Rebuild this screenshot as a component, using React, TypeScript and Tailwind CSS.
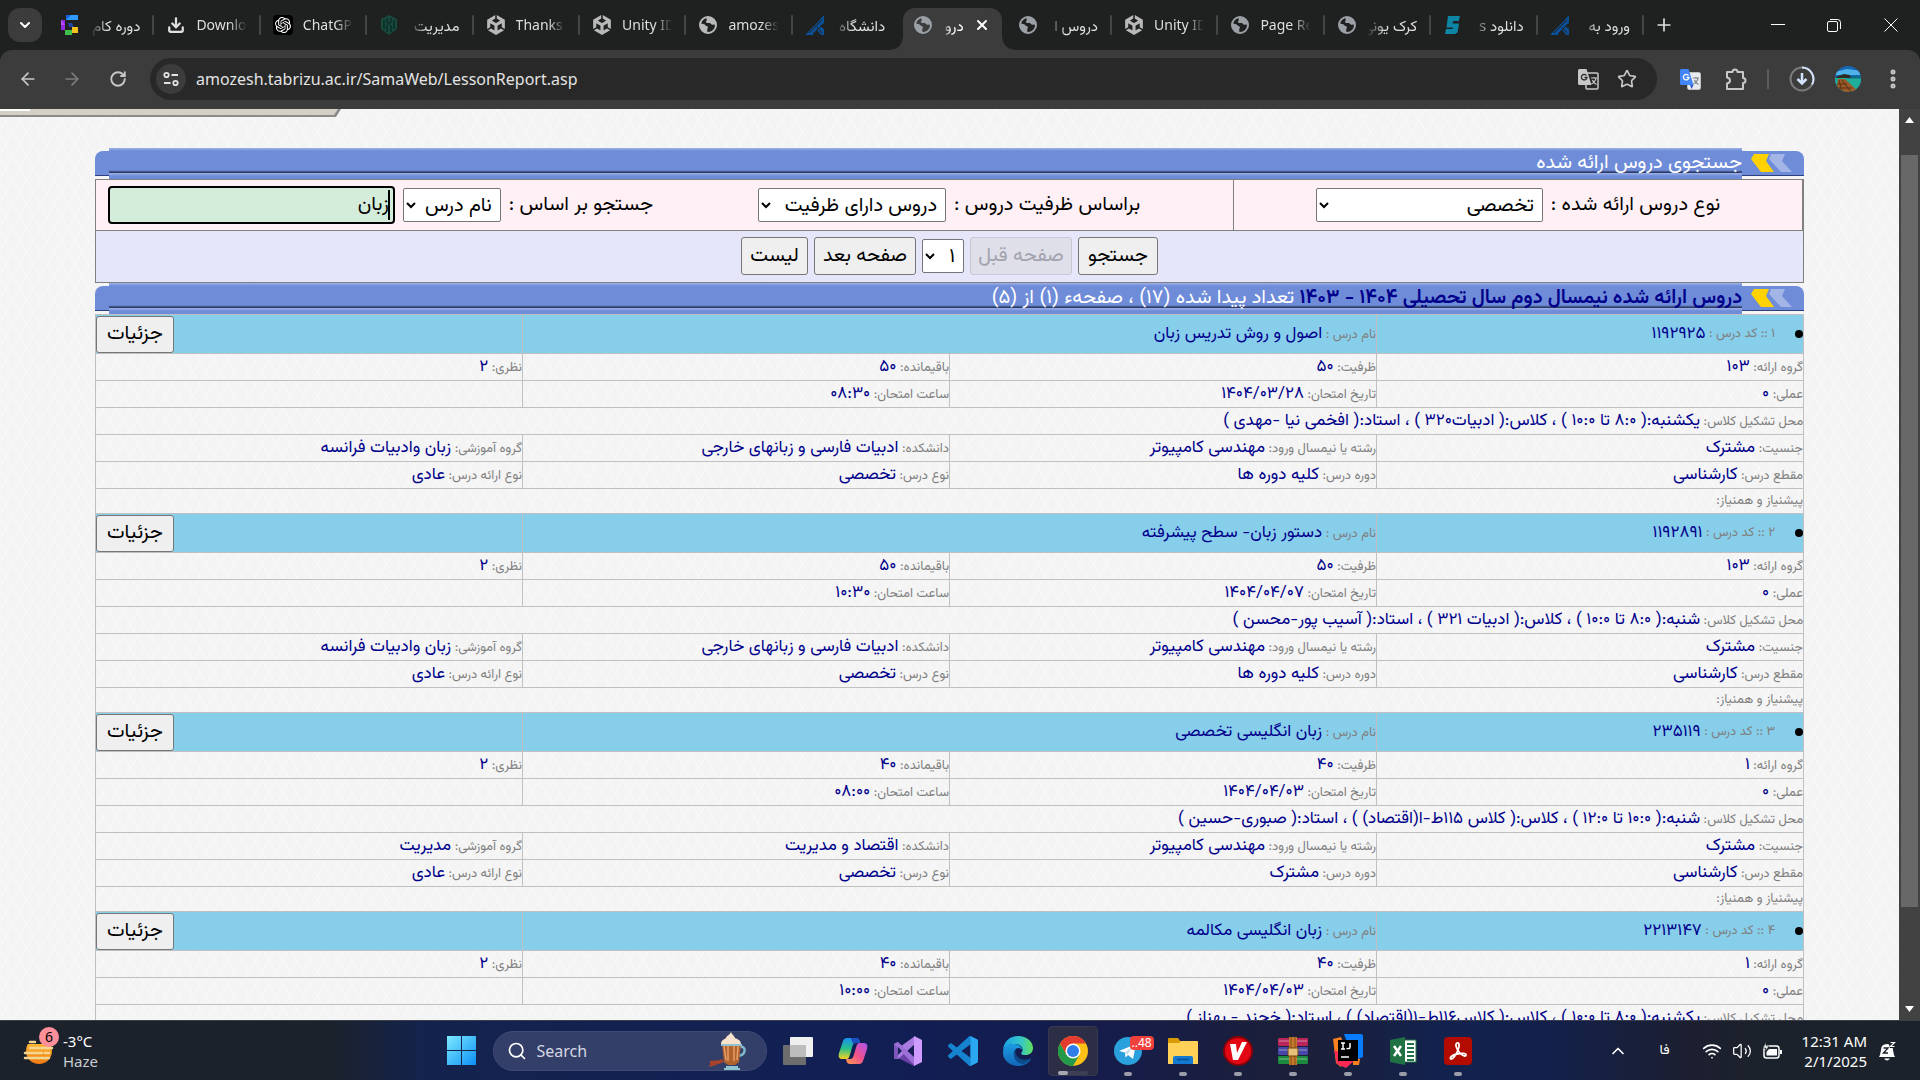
import type { ReactNode } from 'react';
import {
  ArrowLeft,
  ArrowRight,
  ChevronDown,
  ChevronUp,
  Download,
  EllipsisVertical,
  Plus,
  RotateCw,
  Search,
  Star,
  Volume2,
  Wifi,
  X,
} from 'lucide-react';
import { SiOpenai, SiUnity } from 'react-icons/si';

/* ---------- favicons ---------- */

function GlobeIcon({ className }: { className: string }) {
  return (
    <svg viewBox="0 0 20 20" className={className} fill="none">
      <circle cx="10" cy="10" r="8" stroke="currentColor" strokeWidth="2" />
      <path
        d="M2.5 8.5c2 .3 3.6.2 4.6 1.6.9 1.300 2.200 .8 2.700 1.900.5 1.200-.8 1.800-.6 3.200L9.500 18C5.500 18 2 14.500 2 10z"
        fill="currentColor"
      />
      <path
        d="M8.500 2.200C7.800 3.600 9.400 4.300 8.600 5.600c-.6 1-1.300 1.800.2 2.300 1.700.5 2.600-.4 3.700.6.9.9 2 1.700 2.700 1.200.8-.5 1.500.2 2.700.6C18 6 15 2 10 2z"
        fill="currentColor"
      />
    </svg>
  );
}

function UnityIcon() {
  return <SiUnity className="size-5 text-[#b9b9b9]" />;
}

function CourseIcon() {
  return (
    <svg viewBox="0 0 20 20" className="size-5">
      <path d="M6 0h12v5H6z" fill="#2f9bff" />
      <path d="M6 0h5L6 5z" fill="#1a5fe0" />
      <path d="M1 5h4v10H1z" fill="#8f2be0" />
      <path d="M1 5l4 5H1z" fill="#c04cf5" />
      <path d="M5 15h7v5H5z" fill="#3fbf4c" />
      <path d="M12 12h6v6h-6z" fill="#f3c21b" />
      <path d="M8 8h4l2 4H9z" fill="#2441a8" />
    </svg>
  );
}

function ShieldIcon() {
  return (
    <svg viewBox="0 0 20 20" className="size-5">
      <path d="M10 0l8 4v10l-8 6-8-6V4z" fill="#17493d" />
      <path d="M5 5v9M8 3v4l2 2 2-2V3M15 5v9M8 10v7M12 10v7" stroke="#0d2c26" strokeWidth="1.500" fill="none" />
    </svg>
  );
}

function TabrizIcon() {
  return (
    <svg viewBox="0 0 20 20" className="size-5" fill="none">
      <path d="M19 0v8l-4 3 4 3v6h-3l-4-5-4 5H0L12 8z" fill="#0b4f96" />
      <path d="M17 5L4 18M17 10l-9 9M12 12l5 6" stroke="#1f2120" strokeWidth="1" />
    </svg>
  );
}

function SoftIcon() {
  return (
    <svg viewBox="0 0 20 20" className="size-5" fill="#0d86a6">
      <path d="M5 1h12l-1.200 5H10l-.4 2.500H16l-1.500 9L12 19H2l1-5h6.500l.4-1.500H3.500z" />
    </svg>
  );
}

function OpenAiTile() {
  return (
    <span className="flex size-5 items-center justify-center rounded bg-black">
      <SiOpenai className="size-4 text-white" />
    </span>
  );
}

/* ---------- browser tabs ---------- */

type Tab = { title: string; icon: ReactNode; rtl?: boolean };

const greyGlobe = <GlobeIcon className="size-5 text-[#b9b9b9]" />;
const blueGlobe = <GlobeIcon className="size-5 text-[#9aa0a6]" />;

const tabsBefore: Tab[] = [
  { title: 'دوره کام', icon: <CourseIcon />, rtl: true },
  { title: 'Downlo', icon: <Download className="size-[18px] text-[#e0e0e0]" strokeWidth={3} /> },
  { title: 'ChatGP', icon: <OpenAiTile /> },
  { title: 'مدیریت', icon: <ShieldIcon />, rtl: true },
  { title: 'Thanks', icon: <UnityIcon /> },
  { title: 'Unity ID', icon: <UnityIcon /> },
  { title: 'amozes', icon: greyGlobe },
  { title: 'دانشگاه', icon: <TabrizIcon />, rtl: true },
];

const tabsAfter: Tab[] = [
  { title: 'دروس ا', icon: blueGlobe, rtl: true },
  { title: 'Unity ID', icon: <UnityIcon /> },
  { title: 'Page Re', icon: blueGlobe },
  { title: 'کرک یونی', icon: blueGlobe, rtl: true },
  { title: 'دانلود s', icon: <SoftIcon />, rtl: true },
  { title: 'ورود به', icon: <TabrizIcon />, rtl: true },
];

function TabTitle({ title, rtl }: { title: string; rtl?: boolean }) {
  return (
    <span
      dir={rtl ? 'rtl' : 'ltr'}
      className={
        rtl
          ? 'min-w-0 flex-1 overflow-hidden whitespace-nowrap text-right text-[15px] [mask-image:linear-gradient(to_left,black_65%,transparent)]'
          : 'min-w-0 flex-1 overflow-hidden whitespace-nowrap text-left text-sm [mask-image:linear-gradient(to_right,black_65%,transparent)]'
      }
    >
      {title}
    </span>
  );
}

function BrowserTab({ tab, divider = true }: { tab: Tab; divider?: boolean }) {
  return (
    <button
      role="tab"
      aria-selected="false"
      className="flex h-[34px] min-w-0 items-center pl-3 text-[#dedede]"
    >
      <span className="mr-2.5 flex size-5 shrink-0 items-center justify-center">{tab.icon}</span>
      <TabTitle title={tab.title} rtl={tab.rtl} />
      <span className={divider ? 'ml-3 h-5 w-0.5 rounded bg-[#444645]' : 'ml-3 h-5 w-0.5'} />
    </button>
  );
}

function TabStrip() {
  return (
    <div className="flex h-[50px] bg-[#1f2120]">
      <div className="flex h-full items-center pl-2 pr-1.5">
        <button aria-label="Search tabs" className="flex size-[34px] items-center justify-center rounded-xl bg-[#3c3c3c] text-white">
          <ChevronDown className="size-4" strokeWidth={3} />
        </button>
      </div>
      <div role="tablist" className="mt-2 grid h-[42px] max-w-[1596px] min-w-0 flex-1 grid-cols-[repeat(15,minmax(0,1fr))]">
        {tabsBefore.map((tab, i) => (
          <BrowserTab key={i} tab={tab} divider={i < tabsBefore.length - 1} />
        ))}
        <div className="relative flex h-[42px] min-w-0">
          <span className="absolute -left-2 bottom-0 size-3 bg-[radial-gradient(circle_at_0_0,#1f2120_11px,#3c3c3c_12px)]" />
          <span className="absolute -right-2 bottom-0 size-3 bg-[radial-gradient(circle_at_100%_0,#1f2120_11px,#3c3c3c_12px)]" />
          <div className="mx-1 flex h-full min-w-0 flex-1 items-center gap-2.5 rounded-t-xl bg-[#3c3c3c] pb-2 pl-2.5 pr-3 text-white">
            <span className="shrink-0">{blueGlobe}</span>
            <TabTitle title="درو" rtl />
            <button aria-label="Close tab" className="shrink-0">
              <X className="size-4" strokeWidth={3} />
            </button>
          </div>
        </div>
        {tabsAfter.map((tab, i) => (
          <BrowserTab key={i} tab={tab} />
        ))}
      </div>
      <button aria-label="New tab" className="flex h-[50px] w-10 items-center justify-center text-[#dedede]">
        <Plus className="size-5" strokeWidth={2} />
      </button>
      <div className="ml-auto flex h-full text-white">
        <button aria-label="Minimize" className="flex w-14 items-center justify-center">
          <svg viewBox="0 0 14 14" className="size-3.5" stroke="currentColor">
            <path d="M0 6.500h14" />
          </svg>
        </button>
        <button aria-label="Restore" className="flex w-14 items-center justify-center">
          <svg viewBox="0 0 14 14" className="size-3.5" stroke="currentColor" fill="none">
            <rect x=".5" y="3.500" width="10" height="10" rx="1.500" />
            <path d="M3 1.500h7.500a3 3 0 0 1 3 3V11" />
          </svg>
        </button>
        <button aria-label="Close" className="flex w-[58px] items-center justify-center">
          <svg viewBox="0 0 14 14" className="size-3.5" stroke="currentColor">
            <path d="M.5.5l13 13M13.500.5l-13 13" />
          </svg>
        </button>
      </div>
    </div>
  );
}

/* ---------- address bar ---------- */

function TranslateIcon({ coloured }: { coloured?: boolean }) {
  return (
    <svg viewBox="0 0 22 22" className="size-[22px]">
      <rect x="9" y="5" width="12" height="16" rx="1" fill={coloured ? '#e8eaed' : 'none'} stroke={coloured ? '#e8eaed' : '#c7c7c7'} strokeWidth="1.500" />
      <path d="M1 2.500A1.500 1.500 0 0 1 2.500 1h7l5 16h-12A1.500 1.500 0 0 1 1 15.500z" fill={coloured ? '#4285f4' : '#c7c7c7'} />
      {coloured && <path d="M11 17h3.500L12.500 21z" fill="#2a56c6" />}
      <path d="M9.500 7.500A2.800 2.800 0 1 0 10 9.500H7.500" fill="none" stroke={coloured ? '#fff' : '#282828'} strokeWidth="1.300" />
      <path d="M14 10h6M17 9v1M19 10c-.5 3-2.500 5-4.500 6M15.500 12c.5 2 2 3.500 4 4.500" fill="none" stroke={coloured ? '#7a8288' : '#c7c7c7'} strokeWidth="1.200" />
    </svg>
  );
}

function PuzzleIcon() {
  return (
    <svg viewBox="0 0 22 24" className="h-6 w-[22px]" fill="none" stroke="#c7c7c7" strokeWidth="2" strokeLinejoin="round">
      <path d="M2 5h5.500a2.500 2.500 0 0 1 5 0H18v6a2.500 2.500 0 0 1 0 5v6H2v-5.500c2-.3 3-1.500 3-3s-1-2.700-3-3z" />
    </svg>
  );
}

function AddressBar() {
  return (
    <div className="bg-[#1f2120]">
      <div className="flex h-[59px] items-center rounded-t-xl bg-[#3c3c3c] pb-px text-[#c7c7c7]">
        <button aria-label="Back" className="flex w-14 justify-center">
          <ArrowLeft className="size-5" />
        </button>
        <button aria-label="Forward" className="flex w-8 justify-center text-[#7d7d7d]">
          <ArrowRight className="size-5" />
        </button>
        <button aria-label="Reload" className="flex w-[60px] justify-center">
          <RotateCw className="size-[18px]" strokeWidth={2.5} />
        </button>
        <div className="ml-0.5 flex h-[42px] min-w-0 flex-1 items-center rounded-full bg-[#282828] pl-1.5 pr-5">
          <button aria-label="View site information" className="flex size-[30px] shrink-0 items-center justify-center rounded-full bg-[#3c3c3c]">
            <svg viewBox="0 0 16 16" className="size-4" fill="none" stroke="#e3e3e3" strokeWidth="1.800">
              <circle cx="3.500" cy="4" r="2.200" />
              <path d="M8.500 4H15M1 12h6.500" />
              <circle cx="12.500" cy="12" r="2.200" />
            </svg>
          </button>
          <input
            aria-label="Address"
            readOnly
            value="amozesh.tabrizu.ac.ir/SamaWeb/LessonReport.asp"
            className="ml-2.5 min-w-0 flex-1 bg-transparent text-base text-[#e3e3e3] outline-none"
          />
          <button aria-label="Translate this page" className="mr-[18px]">
            <TranslateIcon />
          </button>
          <button aria-label="Bookmark this tab">
            <Star className="size-5" />
          </button>
        </div>
        <div className="flex w-[263px] items-center pl-[22px]">
          <button aria-label="Google Translate" className="mr-6">
            <TranslateIcon coloured />
          </button>
          <button aria-label="Extensions" className="mr-5">
            <PuzzleIcon />
          </button>
          <span className="mr-5 h-5 w-0.5 bg-[#5c5c5c]" />
          <button aria-label="Downloads" className="mr-5">
            <svg viewBox="0 0 26 26" className="size-[26px]" fill="none" strokeWidth="2">
              <circle cx="13" cy="13" r="11.500" stroke="#7b7b7b" />
              <path d="M13 1.500A11.500 11.500 0 0 1 23 18.500" stroke="#d3e3fd" />
              <path d="M13 7v10M8.500 13l4.500 4.500 4.500-4.500" stroke="#d3e3fd" strokeWidth="2.500" />
            </svg>
          </button>
          <button aria-label="Profile" className="mr-5">
            <svg viewBox="0 0 26 26" className="size-[26px]">
              <clipPath id="avatar-clip">
                <circle cx="13" cy="13" r="13" />
              </clipPath>
              <g clipPath="url(#avatar-clip)">
                <path d="M0 0h26v26H0z" fill="#1767b8" />
                <path d="M0 6l12-3 14 2v4H0z" fill="#4fb3ea" />
                <path d="M0 11h26v15H0z" fill="#1fae9a" />
                <path d="M12 10h14v2.500H12z" fill="#0e6d85" />
                <path d="M3 10l6-2 6 1 1 3H0z" fill="#2d2c24" />
                <path d="M3 13h7l14 13H1z" fill="#9a5a2a" />
                <path d="M4 14l3 12M7 14l9 12M2 18h10M2 22h15" stroke="#5c3012" />
              </g>
            </svg>
          </button>
          <button aria-label="Menu">
            <EllipsisVertical className="size-6" strokeWidth={3} />
          </button>
        </div>
      </div>
    </div>
  );
}

/* ---------- page content ---------- */

function SectionTitle({ children }: { children: ReactNode }) {
  return (
    <div className="flex h-[31px] items-center">
      <div className="h-[25px] w-[62px] rounded-tr-lg border-b border-[#2d3f7d] bg-[#6f8cd9]">
        <svg viewBox="0 0 62 24" className="h-6 w-[62px]">
          <path d="M29 3h14l-3 7 10 11H39L27 8z" fill="#a3b5e6" />
          <path d="M12 3h15l-3 7 8 11H19L9 8z" fill="#ffd200" />
        </svg>
      </div>
      <h2 className="h-full min-w-0 flex-1 bg-[repeating-linear-gradient(to_bottom,#9db2e8_0px,#6f8cd9_3px,#6f8cd9_22px,#5c76bd_23px,#2d3a63_24px,#2d3a63_25px)] text-xl leading-[31px] text-white">
        {children}
      </h2>
      <div className="h-[25px] w-3.5 rounded-tl-lg border-b border-[#2d3f7d] bg-[#6f8cd9]" />
    </div>
  );
}

const controlClass = 'h-[34px] rounded-xs border border-[#767676] bg-white px-1 text-xl leading-8 text-black';
const buttonClass =
  'h-[38px] rounded-[3px] border border-[#767676] bg-[#efefef] text-xl text-black disabled:border-[#c8c8d4] disabled:bg-[#dfdfea] disabled:text-[#a3a3ad]';

function SearchForm() {
  return (
    <form className="border border-[#808080] text-xl text-black" onSubmit={(e) => e.preventDefault()}>
      <div className="grid h-[51px] grid-cols-3 divide-x divide-x-reverse divide-[#808080] border-b border-[#808080] bg-[#fff0f5]">
        <div className="flex items-center justify-center gap-2">
          <label htmlFor="lesson-type">نوع دروس ارائه شده :</label>
          <select id="lesson-type" className={`${controlClass} w-[227px]`}>
            <option>تخصصی</option>
          </select>
        </div>
        <div className="flex items-center justify-center gap-2">
          <label htmlFor="capacity">براساس ظرفیت دروس :</label>
          <select id="capacity" className={`${controlClass} w-[188px]`}>
            <option>دروس دارای ظرفیت</option>
          </select>
        </div>
        <div className="flex items-center justify-center gap-2">
          <label htmlFor="search-by">جستجو بر اساس :</label>
          <select id="search-by" className={`${controlClass} w-[98px]`}>
            <option>نام درس</option>
          </select>
          <span className="relative flex">
            <input
              aria-label="عبارت جستجو"
              defaultValue="زبان"
              className="h-[38px] w-[287px] rounded border-2 border-black bg-[#d4edda] px-1 text-xl outline-none"
            />
            <span className="absolute right-[5px] top-1 h-[30px] w-0.5 bg-black" />
          </span>
        </div>
      </div>
      <div className="flex h-[51px] items-center justify-center gap-1.5 bg-[#e6e6fa] pb-px">
        <button className={`${buttonClass} w-20`}>جستجو</button>
        <button disabled className={`${buttonClass} w-[102px]`}>
          صفحه قبل
        </button>
        <select aria-label="صفحه" className={`${controlClass} w-[42px]`}>
          <option>۱</option>
        </select>
        <button className={`${buttonClass} w-[102px]`}>صفحه بعد</button>
        <button className={`${buttonClass} w-[67px]`}>لیست</button>
      </div>
    </form>
  );
}

type Lesson = {
  index: string;
  code: string;
  name: string;
  group: string;
  capacity: string;
  date: string;
  time: string;
  place: string;
  faculty: string;
  department: string;
  period: string;
};

const lessons: Lesson[] = [
  {
    index: '۱',
    code: '۱۱۹۲۹۲۵',
    name: 'اصول و روش تدریس زبان',
    group: '۱۰۳',
    capacity: '۵۰',
    date: '۱۴۰۴/۰۳/۲۸',
    time: '۰۸:۳۰',
    place: 'یکشنبه:( ۸:۰ تا ۱۰:۰ ) ، کلاس:( ادبیات۳۲۰ ) ، استاد:( افخمی نیا -مهدی )',
    faculty: 'ادبیات فارسی و زبانهای خارجی',
    department: 'زبان وادبیات فرانسه',
    period: 'کلیه دوره ها',
  },
  {
    index: '۲',
    code: '۱۱۹۲۸۹۱',
    name: 'دستور زبان- سطح پیشرفته',
    group: '۱۰۳',
    capacity: '۵۰',
    date: '۱۴۰۴/۰۴/۰۷',
    time: '۱۰:۳۰',
    place: 'شنبه:( ۸:۰ تا ۱۰:۰ ) ، کلاس:( ادبیات ۳۲۱ ) ، استاد:( آسیب پور-محسن )',
    faculty: 'ادبیات فارسی و زبانهای خارجی',
    department: 'زبان وادبیات فرانسه',
    period: 'کلیه دوره ها',
  },
  {
    index: '۳',
    code: '۲۳۵۱۱۹',
    name: 'زبان انگلیسی تخصصی',
    group: '۱',
    capacity: '۴۰',
    date: '۱۴۰۴/۰۴/۰۳',
    time: '۰۸:۰۰',
    place: 'شنبه:( ۱۰:۰ تا ۱۲:۰ ) ، کلاس:( کلاس ۱۱۵ط-ا(اقتصاد) ) ، استاد:( صبوری-حسین )',
    faculty: 'اقتصاد و مدیریت',
    department: 'مدیریت',
    period: 'مشترک',
  },
  {
    index: '۴',
    code: '۲۲۱۳۱۴۷',
    name: 'زبان انگلیسی مکالمه',
    group: '۱',
    capacity: '۴۰',
    date: '۱۴۰۴/۰۴/۰۳',
    time: '۱۰:۰۰',
    place: 'یکشنبه:( ۸:۰ تا ۱۰:۰ ) ، کلاس:( کلاس۱۱۶ط-۱(اقتصاد) ) ، استاد:( خجند - بهناز )',
    faculty: 'اقتصاد و مدیریت',
    department: 'مدیریت',
    period: 'مشترک',
  },
];

function Field({ label, value, span = 1 }: { label: string; value?: string; span?: number }) {
  return (
    <td colSpan={span} className="border border-[#c0c0c0]">
      <span className="text-[13px] text-[#808080]">{label} </span>
      {value && <span className="text-[17px] text-[#00008b]">{value}</span>}
    </td>
  );
}

function LessonRows({ lesson }: { lesson: Lesson }) {
  return (
    <tbody className="leading-6">
      <tr className="h-[39px] bg-[#87ceeb]">
        <td className="border border-[#c0c0c0]">
          <span className="flex items-center">
            <span className="size-2 rounded-full bg-black" />
            <span className="mr-5 text-[13px] text-[#808080]">
              {lesson.index} :: کد درس :&nbsp;
            </span>
            <span className="text-[17px] text-[#00008b]">{lesson.code}</span>
          </span>
        </td>
        <Field label="نام درس :" value={lesson.name} span={2} />
        <td className="border border-[#c0c0c0] p-0">
          <button className="mr-auto block h-[37px] w-[78px] rounded-[3px] border border-[#767676] bg-[#efefef] text-xl leading-none text-black">
            جزئیات
          </button>
        </td>
      </tr>
      <tr className="h-[27px]">
        <Field label="گروه ارائه:" value={lesson.group} />
        <Field label="ظرفیت:" value={lesson.capacity} />
        <Field label="باقیمانده:" value={lesson.capacity} />
        <Field label="نظری:" value="۲" />
      </tr>
      <tr className="h-[27px]">
        <Field label="عملی:" value="۰" />
        <Field label="تاریخ امتحان:" value={lesson.date} />
        <Field label="ساعت امتحان:" value={lesson.time} />
        <td className="border border-[#c0c0c0]" />
      </tr>
      <tr className="h-[27px]">
        <Field label="محل تشکیل کلاس:" value={lesson.place} span={4} />
      </tr>
      <tr className="h-[27px]">
        <Field label="جنسیت:" value="مشترک" />
        <Field label="رشته یا نیمسال ورود:" value="مهندسی کامپیوتر" />
        <Field label="دانشکده:" value={lesson.faculty} />
        <Field label="گروه آموزشی:" value={lesson.department} />
      </tr>
      <tr className="h-[27px]">
        <Field label="مقطع درس:" value="کارشناسی" />
        <Field label="دوره درس:" value={lesson.period} />
        <Field label="نوع درس:" value="تخصصی" />
        <Field label="نوع ارائه درس:" value="عادی" />
      </tr>
      <tr className="h-[25px]">
        <Field label="پیشنیاز و همنیاز:" span={4} />
      </tr>
    </tbody>
  );
}

function Page() {
  return (
    <main
      dir="rtl"
      className="relative min-w-0 flex-1 overflow-hidden bg-[#f4f4f4] bg-[image:repeating-linear-gradient(60deg,transparent_0px,transparent_10px,#fafafa_11px,#f0f0f0_12px),repeating-linear-gradient(120deg,transparent_0px,transparent_10px,#fafafa_11px,#f0f0f0_12px)] font-['Vazirmatn','DejaVu_Sans',sans-serif]"
    >
      <svg viewBox="0 0 342 9" className="absolute left-0 top-0 h-[9px] w-[342px]">
        <path d="M0 0h341l-5 8H0z" fill="#8d8b87" />
        <path d="M0 0h338l-4 6H0z" fill="#d4d0c8" />
        <path d="M0 0h30v2H0z" fill="#ffffff" />
      </svg>
      <div className="mx-[5%] pt-[39px]">
        <SectionTitle>جستجوی دروس ارائه شده</SectionTitle>
        <SearchForm />
        <SectionTitle>
          <span className="font-semibold text-[#00008b]">دروس ارائه شده نیمسال دوم سال تحصیلی ۱۴۰۴ - ۱۴۰۳</span> تعداد پیدا شده (۱۷) ، صفحهء (۱) از (۵)
        </SectionTitle>
        <table className="w-full table-fixed border-collapse">
          {lessons.map((lesson) => (
            <LessonRows key={lesson.index} lesson={lesson} />
          ))}
        </table>
      </div>
    </main>
  );
}

function PageScrollbar() {
  return (
    <div className="flex w-[21px] flex-col items-center bg-[#424242] py-2">
      <svg viewBox="0 0 9 6" className="h-1.5 w-[9px]">
        <path d="M4.500 0L9 6H0z" fill="#fff" />
      </svg>
      <div className="mt-8 h-[84%] w-[17px] bg-[#686868]" />
      <svg viewBox="0 0 9 6" className="mt-auto h-1.5 w-[9px]">
        <path d="M4.500 6L9 0H0z" fill="#fff" />
      </svg>
    </div>
  );
}

/* ---------- taskbar ---------- */

function Dot() {
  return <span className="absolute bottom-[5px] h-1 w-2 rounded-full bg-[#9a9ca8]" />;
}

function TaskButton({ label, running, children }: { label: string; running?: boolean; children: ReactNode }) {
  return (
    <button aria-label={label} className="relative flex h-[60px] w-[55px] items-center justify-center">
      {children}
      {running && <Dot />}
    </button>
  );
}

function WeatherIcon() {
  return (
    <svg viewBox="0 0 36 36" className="size-9">
      <defs>
        <linearGradient id="sun" x1="0" y1="0" x2="0" y2="1">
          <stop offset="0" stopColor="#ffc83a" />
          <stop offset="1" stopColor="#f07a12" />
        </linearGradient>
      </defs>
      <circle cx="16" cy="18" r="13" fill="url(#sun)" />
      <path d="M2 2h26v9H2z" fill="#1c222b" />
      <path d="M7 9h5M7 15h22M2 20h17M22 20h4M2 25h24" stroke="#f3d693" strokeWidth="2.500" strokeLinecap="round" />
    </svg>
  );
}

function DrinkIcon() {
  return (
    <svg viewBox="0 0 40 38" className="h-[38px] w-10">
      <path d="M32 15c6-2 7 8-2 9" fill="none" stroke="#7fb9c9" strokeWidth="2.500" />
      <path d="M1 33l13-6 2 3-14 5zM2 29l12-1v3L2 32z" fill="#a8432a" />
      <path d="M14 12h19l-2 18-4 3h-7l-4-3z" fill="#b2622d" />
      <path d="M16 14l2 14M20 14v15M26 14v15M30 14l-1 14" stroke="#e3a06a" strokeWidth="1.500" />
      <path d="M13 13h21M18 35h12M16 37h16" stroke="#8fc3d1" strokeWidth="2" />
      <path d="M13 12c0-4 4-5 5-6 1-3 3-2 5-6 1 3 3 3 4 6 2 1 6 2 6 6z" fill="#f7e3cd" />
    </svg>
  );
}

function CopilotIcon() {
  return (
    <svg viewBox="0 0 30 30" className="size-[30px]">
      <defs>
        <linearGradient id="cp-a" x1="0" y1="0" x2="0" y2="1">
          <stop offset="0" stopColor="#1a8ff0" />
          <stop offset=".5" stopColor="#28c08a" />
          <stop offset="1" stopColor="#f5d21f" />
        </linearGradient>
        <linearGradient id="cp-b" x1="1" y1="0" x2="0" y2="1">
          <stop offset="0" stopColor="#a856f0" />
          <stop offset=".5" stopColor="#f0508f" />
          <stop offset="1" stopColor="#ff9a4a" />
        </linearGradient>
      </defs>
      <path d="M9 2h9c2 0 3 1 3.500 3l.5 2h-4c-2 0-3 1-3.500 3l-3 10c-.5 2-1.500 3-3 3H5c-4 0-5-2-4-6L5 5c.7-2 2-3 4-3z" fill="url(#cp-a)" />
      <path d="M21 28h-9c-2 0-3-1-3.500-3L8 23h4c2 0 3-1 3.500-3l3-10c.5-2 1.500-3 3-3H25c4 0 5 2 4 6l-4 12c-.7 2-2 3-4 3z" fill="url(#cp-b)" />
      <path d="M13 2h5c2 0 3 1 3.500 3l.5 2h-4c-1 0-2 0-3 1z" fill="#1b4fc4" />
    </svg>
  );
}

function VisualStudioIcon() {
  return (
    <svg viewBox="0 0 30 30" className="size-[30px]">
      <path d="M1 8l4-2 16 15V30L5 22 1 23z" fill="#6b41a8" />
      <path d="M1 22l4 1L22 8V0L4 13l-3 2z" fill="#a87ce0" />
      <path d="M1 8l4-2v16l-4 1z" fill="#7d55bd" />
      <path d="M5 6l17 16v8L1 8z" fill="#9b6fd6" />
      <path d="M21 0l8 4v22l-8 4z" fill="#cf9bff" />
      <path d="M5 11l4 4-4 4z" fill="#171f55" />
      <path d="M21 10v10l-6-5z" fill="#171f55" />
    </svg>
  );
}

function VsCodeIcon() {
  return (
    <svg viewBox="0 0 24 24" className="size-[30px]">
      <path
        d="M23.150 2.587L18.210.21a1.494 1.494 0 0 0-1.705.29l-9.460 8.630-4.120-3.128a.999.999 0 0 0-1.276.057L.327 7.261A1 1 0 0 0 .326 8.740L3.899 12 .326 15.260a1 1 0 0 0 .001 1.479L1.650 17.940a.999.999 0 0 0 1.276.057l4.120-3.128 9.460 8.630a1.492 1.492 0 0 0 1.704.290l4.942-2.377A1.500 1.500 0 0 0 24 20.060V3.939a1.500 1.500 0 0 0-.85-1.352zm-5.146 14.861L10.826 12l7.178-5.448v10.896z"
        fill="#1583cf"
      />
      <path d="M18 .1l5.150 2.487A1.500 1.500 0 0 1 24 3.939V20.060a1.500 1.500 0 0 1-.85 1.352L18 23.900z" fill="#2ba7f2" />
    </svg>
  );
}

function EdgeIcon() {
  return (
    <svg viewBox="0 0 30 30" className="size-[30px]">
      <defs>
        <linearGradient id="edge-a" x1="0" y1="0" x2="1" y2="0">
          <stop offset="0" stopColor="#1aa3e8" />
          <stop offset=".6" stopColor="#36c6c9" />
          <stop offset="1" stopColor="#5fe05a" />
        </linearGradient>
        <linearGradient id="edge-b" x1="0" y1="0" x2="0" y2="1">
          <stop offset="0" stopColor="#1b9de2" />
          <stop offset="1" stopColor="#1266b8" />
        </linearGradient>
      </defs>
      <path d="M0 14C1 5 7 0 15 0c9 0 15 6 15 12 0 5-4 7-7 7-4 0-6-1-4-3 2-3-1-8-7-8C6 8 1 11 0 14z" fill="url(#edge-a)" />
      <path d="M0 15C1 10 6 8 11 8c5 0 8 3 8 6-1-2-4-3-6-1-4 4-1 12 8 12 3 0 5-1 7-2-3 5-8 7-13 7C6 30-1 23 0 15z" fill="url(#edge-b)" />
      <path d="M12.500 13c-4 5-1 15 8 15 3-1 6-3 7.500-6-10 5-17-2-15.500-9z" fill="#0d4a8c" />
    </svg>
  );
}

function ChromeIcon() {
  return (
    <svg viewBox="0 0 30 30" className="size-[30px]">
      <circle cx="15" cy="15" r="15" fill="#fbc116" />
      <path d="M15 7.500h13A15 15 0 0 0 2 7.500l6.500 11.300z" fill="#e33b2e" />
      <path d="M2 7.500A15 15 0 0 0 15 30l6.500-11.200H8.500z" fill="#229a49" />
      <circle cx="15" cy="15" r="7.500" fill="#fff" />
      <circle cx="15" cy="15" r="6" fill="#2f7de9" />
    </svg>
  );
}

function WinRarIcon() {
  return (
    <svg viewBox="0 0 30 30" className="size-[30px]">
      <rect x="0" y="2" width="30" height="8" rx="1" fill="#b9265a" />
      <rect x="0" y="11" width="30" height="8" rx="1" fill="#4646a8" />
      <rect x="0" y="20" width="30" height="8" rx="1" fill="#1c8a3c" />
      <path d="M1 5h28M1 14h28M1 23h28" stroke="#ffffff" strokeOpacity=".45" />
      <rect x="11" y="1" width="8" height="28" fill="#c47a2c" />
      <path d="M13 1v28M17 1v28" stroke="#8a4f14" />
      <rect x="10" y="12" width="10" height="8" rx="1" fill="#e8c27a" stroke="#6e4512" />
    </svg>
  );
}

function IntelliJIcon() {
  return (
    <svg viewBox="0 0 30 34" className="h-[34px] w-[30px]">
      <path d="M11 0h17a2 2 0 0 1 2 2v21l-9 4z" fill="#087cfa" />
      <path d="M0 5l8-2 4 12-4 18-5-4z" fill="#fc801d" />
      <path d="M1 16l14 6 6 5-8 7-9-4z" fill="#fe2857" />
      <path d="M20 24l7 1-1 6h-6z" fill="#fc801d" />
      <rect x="5" y="6" width="20" height="21" fill="#000" />
      <path d="M8 9h4M10 9v6M8 15h4M17 9v4.500q0 1.500-3.500 1M8 23h8" stroke="#fff" strokeWidth="1.500" fill="none" />
    </svg>
  );
}

function ExcelIcon() {
  return (
    <svg viewBox="0 0 30 30" className="size-[30px]">
      <rect x="14" y="4" width="14" height="22" fill="#fff" stroke="#207245" />
      <path d="M19 8h7M19 12h7M19 16h7M19 20h7M19 24h7" stroke="#207245" strokeWidth="2" />
      <path d="M2 4l15-3v28L2 26z" fill="#207245" />
      <path d="M6 10l7 10M13 10L6 20" stroke="#fff" strokeWidth="2.500" />
    </svg>
  );
}

function AcrobatIcon() {
  return (
    <svg viewBox="0 0 28 28" className="size-7">
      <rect width="28" height="28" rx="4" fill="#b30b00" />
      <path
        d="M13 6c2-1 3 2 1 7s-5 9-7 9c-2-1 1-4 6-5s9-1 9 1-4 1-7-3-4-8-2-9z"
        fill="none"
        stroke="#fff"
        strokeWidth="1.800"
      />
    </svg>
  );
}

function Taskbar() {
  return (
    <footer className="flex h-[60px] shrink-0 items-center border-t border-[#3a3f4a] bg-[linear-gradient(to_right,#1c222b_0%,#1c222b_17%,#14234d_22%,#111f55_45%,#141c4e_55%,#1c1f38_68%,#12224e_75%,#13204a_81%,#1c1f30_88%,#1c222b_92%)] text-white">
      <button className="flex flex-1 items-center gap-1 pl-[23px] text-left text-[15px] leading-5">
        <span className="relative">
          <WeatherIcon />
          <span className="absolute -top-1.5 left-4 flex size-5 items-center justify-center rounded-full bg-[#ff8f98] text-sm text-black">
            6
          </span>
        </span>
        <span className="flex flex-col">
          <span>-3°C</span>
          <span className="text-[#c9ccd1]">Haze</span>
        </span>
      </button>

      <div className="flex items-center">
        <TaskButton label="Start">
          <svg viewBox="0 0 29 29" className="size-[29px]">
            <defs>
              <linearGradient id="win" x1="0" y1="0" x2="1" y2="1">
                <stop offset="0" stopColor="#7deaff" />
                <stop offset="1" stopColor="#0c8ff5" />
              </linearGradient>
            </defs>
            <path d="M0 0h14v14H0zM15 0h14v14H15zM0 15h14v14H0zM15 15h14v14H15z" fill="url(#win)" />
          </svg>
        </TaskButton>
        <label className="mx-1 flex h-10 w-[274px] items-center rounded-full border border-[#3f4b75] bg-[#343f69] pl-[13px] pr-[18px]">
          <Search className="size-5" />
          <input aria-label="Search" placeholder="Search" className="ml-2.5 min-w-0 flex-1 bg-transparent text-base outline-none placeholder:text-[#d5d8e2]" />
          <DrinkIcon />
        </label>
        <TaskButton label="Task View">
          <svg viewBox="0 0 30 28" className="h-7 w-[30px]">
            <rect x="0" y="8" width="23" height="20" rx="1" fill="#6d6d6d" />
            <rect x="7" y="0" width="23" height="20" rx="1" fill="#f0f0f0" />
            <path d="M7 8h16v12H7z" fill="#bdbdbd" />
          </svg>
        </TaskButton>
        <TaskButton label="Copilot">
          <CopilotIcon />
        </TaskButton>
        <TaskButton label="Visual Studio">
          <VisualStudioIcon />
        </TaskButton>
        <TaskButton label="Visual Studio Code">
          <VsCodeIcon />
        </TaskButton>
        <TaskButton label="Edge">
          <EdgeIcon />
        </TaskButton>
        <button aria-label="Chrome" className="relative flex h-[60px] w-[55px] items-center justify-center">
          <span className="flex h-[50px] w-[50px] items-center justify-center rounded border border-[#35384f] bg-[#2b2e45]">
            <ChromeIcon />
          </span>
          <span className="absolute bottom-1.5 left-3 h-1 w-[30px] rounded-full bg-[#3d4054]" />
          <span className="absolute bottom-1.5 left-3 h-1 w-2.5 rounded-full bg-[#a6a8b2]" />
        </button>
        <TaskButton label="Telegram" running>
          <svg viewBox="0 0 28 28" className="size-7">
            <circle cx="14" cy="14" r="14" fill="#2aa1dc" />
            <path d="M5 14l17-7-3 15-5-4-2.500 2.500-.5-5z" fill="#fff" />
            <path d="M11 15.500l9-7-6.500 9z" fill="#c3dcec" />
          </svg>
          <span className="absolute left-[29px] top-[15px] rounded bg-[#f0403c] px-0.5 text-xs leading-3.5 text-white">..48</span>
        </TaskButton>
        <TaskButton label="File Explorer" running>
          <svg viewBox="0 0 30 28" className="h-7 w-[30px]">
            <path d="M0 2a1 1 0 0 1 1-1h9l3 4h10v4H0z" fill="#d99a06" />
            <path d="M0 6h11l2-2h16a1 1 0 0 1 1 1v22H0z" fill="#ffd257" />
            <path d="M5 27v-6a2 2 0 0 1 2-2h16a2 2 0 0 1 2 2v6z" fill="#1379d1" />
            <path d="M9 22.500h12" stroke="#0b4f91" strokeWidth="1.500" />
          </svg>
        </TaskButton>
        <TaskButton label="V2Ray" running>
          <svg viewBox="0 0 30 30" className="size-[30px]">
            <circle cx="15" cy="15" r="14" fill="#e30613" stroke="#8b0008" strokeWidth="2" />
            <path d="M7 8h6l1 9 5-11h5L15 24h-5z" fill="#fff" />
          </svg>
        </TaskButton>
        <TaskButton label="WinRAR" running>
          <WinRarIcon />
        </TaskButton>
        <TaskButton label="IntelliJ IDEA" running>
          <IntelliJIcon />
        </TaskButton>
        <TaskButton label="Excel" running>
          <ExcelIcon />
        </TaskButton>
        <TaskButton label="Acrobat" running>
          <AcrobatIcon />
        </TaskButton>
      </div>

      <div className="flex flex-1 items-center justify-end pr-6">
        <button aria-label="Show hidden icons" className="mr-8">
          <ChevronUp className="size-5" />
        </button>
        <span className="mr-8 font-['Vazirmatn','DejaVu_Sans',sans-serif] text-sm">فا</span>
        <button aria-label="Network, volume and battery" className="mr-5 flex items-center gap-2.5">
          <Wifi className="size-5" strokeWidth={2} />
          <Volume2 className="size-5" strokeWidth={1.5} />
          <svg viewBox="0 0 20 18" className="h-[18px] w-5" fill="none" stroke="#fff" strokeWidth="1.500">
            <rect x="2" y="4" width="15" height="12" rx="2.500" />
            <path d="M19 8v4" strokeWidth="2" />
            <path d="M7 7h8v6.500H4.500V10z" fill="#fff" stroke="none" />
            <path d="M4 0L1 6h3l-1 4 4-6H4z" fill="#fff" stroke="#1c222b" strokeWidth=".6" />
          </svg>
        </button>
        <time className="mr-[11px] text-right text-[15px] leading-5">
          12:31 AM
          <br />
          2/1/2025
        </time>
        <button aria-label="Notifications">
          <svg viewBox="0 0 18 20" className="h-5 w-[18px]">
            <path d="M3 9q0-6 6-6t6 6l1 5 1 2H1l1-2zM6 17.500h6q-3 4-6 0z" fill="#fff" />
            <path d="M5.500 7h4.500l-4.500 5h4.500" stroke="#1c222b" strokeWidth="1.400" fill="none" />
            <path d="M10 0h8v7h-6z" fill="#1c222b" />
            <path d="M12.500 1.500h4l-4 4h4" stroke="#fff" strokeWidth="1.200" fill="none" />
          </svg>
        </button>
      </div>
    </footer>
  );
}

export default function App() {
  return (
    <div className="flex h-screen flex-col overflow-hidden font-['Noto_Sans','Vazirmatn',sans-serif]">
      <TabStrip />
      <AddressBar />
      <div className="flex min-h-0 flex-1">
        <Page />
        <PageScrollbar />
      </div>
      <Taskbar />
    </div>
  );
}
